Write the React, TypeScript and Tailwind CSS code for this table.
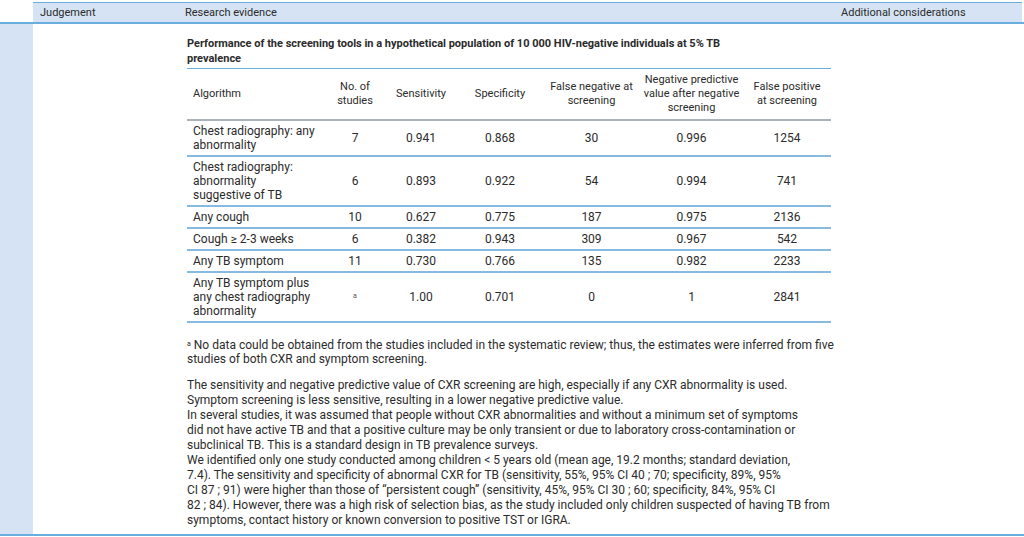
interface Row {
  algorithm: string[];
  studies: string;
  sensitivity: string;
  specificity: string;
  falseNegative: string;
  npv: string;
  falsePositive: string;
}

const rows: Row[] = [
  { algorithm: ['Chest radiography: any', 'abnormality'], studies: '7', sensitivity: '0.941', specificity: '0.868', falseNegative: '30', npv: '0.996', falsePositive: '1254' },
  { algorithm: ['Chest radiography:', 'abnormality', 'suggestive of TB'], studies: '6', sensitivity: '0.893', specificity: '0.922', falseNegative: '54', npv: '0.994', falsePositive: '741' },
  { algorithm: ['Any cough'], studies: '10', sensitivity: '0.627', specificity: '0.775', falseNegative: '187', npv: '0.975', falsePositive: '2136' },
  { algorithm: ['Cough ≥ 2-3 weeks'], studies: '6', sensitivity: '0.382', specificity: '0.943', falseNegative: '309', npv: '0.967', falsePositive: '542' },
  { algorithm: ['Any TB symptom'], studies: '11', sensitivity: '0.730', specificity: '0.766', falseNegative: '135', npv: '0.982', falsePositive: '2233' },
  { algorithm: ['Any TB symptom plus', 'any chest radiography', 'abnormality'], studies: 'a', sensitivity: '1.00', specificity: '0.701', falseNegative: '0', npv: '1', falsePositive: '2841' }
];

const ScreeningTable = () => {
  return (
    <table className="w-[644px] table-fixed border-collapse text-[12px] leading-[14px] text-[#2b2b2b]">
      <colgroup>
        <col className="w-[138px]" />
        <col className="w-[60px]" />
        <col className="w-[72px]" />
        <col className="w-[86px]" />
        <col className="w-[97px]" />
        <col className="w-[103px]" />
        <col className="w-[88px]" />
      </colgroup>
      <thead>
        <tr className="border-t border-b-2 border-t-[#6aaee0] border-b-[#a9b3bb] text-[11px] leading-[14px]">
          <th className="px-[6px] py-[4px] text-left font-normal">Algorithm</th>
          <th className="py-[4px] font-normal">No. of<br />studies</th>
          <th className="py-[4px] font-normal">Sensitivity</th>
          <th className="py-[4px] font-normal">Specificity</th>
          <th className="py-[4px] font-normal">False negative at<br />screening</th>
          <th className="py-[4px] font-normal">Negative predictive<br />value after negative<br />screening</th>
          <th className="py-[4px] font-normal">False positive<br />at screening</th>
        </tr>
      </thead>
      <tbody>
        {rows.map((row, i) => (
          <tr key={i} className="border-b-2 border-[#88b9de]">
            <td className="px-[6px] py-[3px] align-middle">
              {row.algorithm.map((line, j) => (
                <div key={j} className="whitespace-nowrap">{line}</div>
              ))}
            </td>
            <td className="text-center align-middle">
              {row.studies === 'a' ? <sup className="text-[7px] text-[#555]">a</sup> : row.studies}
            </td>
            <td className="text-center align-middle">{row.sensitivity}</td>
            <td className="text-center align-middle">{row.specificity}</td>
            <td className="text-center align-middle">{row.falseNegative}</td>
            <td className="text-center align-middle">{row.npv}</td>
            <td className="text-center align-middle">{row.falsePositive}</td>
          </tr>
        ))}
      </tbody>
    </table>
  );
};

const App = () => {
  return (
    <div className="w-[1024px] h-[537px] overflow-hidden bg-white pt-[2px] font-['Roboto',sans-serif] text-[#2b2b2b]">
      <div className="ml-[33px] mr-[2px] grid grid-cols-[145px_656px_1fr] border-t border-[#6aaee0] bg-[#d5e3f4] text-[11px] leading-[19px]">
        <div className="px-[7px]">Judgement</div>
        <div className="px-[7px]">Research evidence</div>
        <div className="px-[7px]">Additional considerations</div>
      </div>
      <div className="flex border-t-2 border-b-2 border-[#6aaee0]">
        <div className="w-[33px] shrink-0 bg-[#d5e3f4]" />
        <div className="w-[145px] shrink-0" />
        <div className="w-[656px] shrink-0 px-[9px] pt-[12px] pb-[6px]">
          <h3 className="mb-[2px] text-[11px] font-bold leading-[15px]">
            Performance of the screening tools in a hypothetical population of 10 000 HIV-negative individuals at 5% TB
            <br />
            prevalence
          </h3>
          <ScreeningTable />
          <p className="mt-[15px] whitespace-nowrap text-[12px] leading-[14px]">
            <sup className="text-[7px]">a</sup> No data could be obtained from the studies included in the systematic review; thus, the estimates were inferred from five
            <br />
            studies of both CXR and symptom screening.
          </p>
          <p className="mt-[12px] whitespace-nowrap text-[12px] leading-[15px]">
            The sensitivity and negative predictive value of CXR screening are high, especially if any CXR abnormality is used.
            <br />
            Symptom screening is less sensitive, resulting in a lower negative predictive value.
            <br />
            In several studies, it was assumed that people without CXR abnormalities and without a minimum set of symptoms
            <br />
            did not have active TB and that a positive culture may be only transient or due to laboratory cross-contamination or
            <br />
            subclinical TB. This is a standard design in TB prevalence surveys.
            <br />
            We identified only one study conducted among children &lt; 5 years old (mean age, 19.2 months; standard deviation,
            <br />
            7.4). The sensitivity and specificity of abnormal CXR for TB (sensitivity, 55%, 95% CI 40 ; 70; specificity, 89%, 95%
            <br />
            CI 87 ; 91) were higher than those of “persistent cough” (sensitivity, 45%, 95% CI 30 ; 60; specificity, 84%, 95% CI
            <br />
            82 ; 84). However, there was a high risk of selection bias, as the study included only children suspected of having TB from
            <br />
            symptoms, contact history or known conversion to positive TST or IGRA.
          </p>
        </div>
        <div className="flex-1" />
      </div>
    </div>
  );
};

export default App;
